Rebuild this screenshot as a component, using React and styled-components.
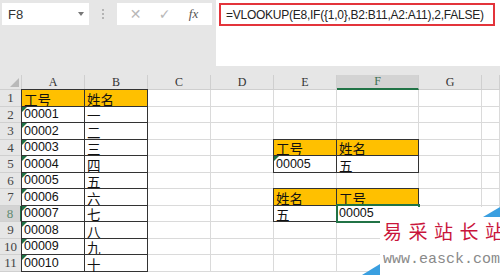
import React from 'react';
import styled, { createGlobalStyle } from 'styled-components';

const GlobalStyle = createGlobalStyle`
  body {
    margin: 0;
    background: #fff;
    font-family: "Liberation Sans", "Noto Sans CJK SC", sans-serif;
  }
`

const Screen = styled.div`
  position: relative;
  width: 500px;
  height: 275px;
  overflow: hidden;
  background: #fff;
`

const TopBar = styled.div`
  display: flex;
  align-items: flex-start;
  height: 63px;
  background: #e6e6e6;
`

const NameBox = styled.div`
  display: flex;
  align-items: center;
  justify-content: space-between;
  box-sizing: border-box;
  width: 87px;
  height: 22px;
  margin: 3px 0 0 2px;
  padding: 0 5px 0 6px;
  background: #fff;
  color: #333;
  font-size: 13px;
`

const Caret = styled.span`
  width: 0;
  height: 0;
  border-left: 3px solid transparent;
  border-right: 3px solid transparent;
  border-top: 4px solid #777;
`

const Grip = styled.div`
  display: flex;
  flex-direction: column;
  justify-content: center;
  gap: 2px;
  width: 28px;
  height: 22px;
  margin-top: 3px;
  align-items: center;
`

const Dot = styled.span`
  width: 2px;
  height: 2px;
  background: #b4b4b4;
`

const ButtonBox = styled.div`
  display: flex;
  align-items: center;
  justify-content: space-around;
  box-sizing: border-box;
  width: 95px;
  height: 22px;
  margin-top: 3px;
  padding: 0 4px;
  background: #fff;
`

const ToolIcon = styled.span`
  width: 26px;
  text-align: center;
  color: ${p => p.$dark ? '#555' : '#b8b8b8'};
  font-family: ${p => p.$dark ? '"Liberation Serif", serif' : '"DejaVu Sans", sans-serif'};
  font-style: ${p => p.$dark ? 'italic' : 'normal'};
  font-size: ${p => p.$dark ? '13px' : '14px'};
`

const FormulaPanel = styled.div`
  flex: 1;
  height: 63px;
  margin-left: 4px;
  padding: 3px 5px 0 3px;
  background: #fff;
`

const FormulaBox = styled.div`
  display: flex;
  align-items: center;
  box-sizing: border-box;
  width: 276px;
  height: 23px;
  padding-left: 5px;
  border: 2px solid #e3343b;
  color: #222;
  font-size: 12px;
  letter-spacing: -0.25px;
  white-space: nowrap;
`

const Strip = styled.div`
  height: 12px;
  background: #e6e6e6;
`

const Row = styled.div`
  display: flex;
  height: ${p => p.$h}px;
`

const Corner = styled.div`
  position: relative;
  box-sizing: border-box;
  width: 22px;
  background: #e6e6e6;
  border-right: 1px solid #cfcfcf;
  border-bottom: 1px solid #cfcfcf;

  &::after {
    content: '';
    position: absolute;
    right: 2px;
    bottom: 2px;
    border-left: 9px solid transparent;
    border-bottom: 9px solid #b9b9b9;
  }
`

const ColHead = styled.div`
  display: flex;
  align-items: center;
  justify-content: center;
  box-sizing: border-box;
  width: ${p => p.$w}px;
  flex: ${p => p.$grow ? 1 : 'none'};
  background: ${p => p.$active ? '#d3d3d3' : '#e6e6e6'};
  border-right: 1px solid #cfcfcf;
  border-bottom: ${p => p.$active ? '2px solid #217346' : '1px solid #cfcfcf'};
  color: ${p => p.$active ? '#3d6f52' : '#333'};
  font-family: "Liberation Serif", serif;
  font-size: 12px;
`

const RowHead = styled.div`
  display: flex;
  align-items: center;
  justify-content: center;
  box-sizing: border-box;
  width: 22px;
  background: ${p => p.$active ? '#d3d3d3' : '#e6e6e6'};
  border-bottom: 1px solid #d0d0d0;
  border-right: ${p => p.$active ? '2px solid #217346' : '1px solid #cfcfcf'};
  color: ${p => p.$active ? '#5f8a70' : '#444'};
  font-family: "Liberation Serif", serif;
  font-size: 13px;
  line-height: 14px;
`

const Cell = styled.div`
  position: relative;
  display: flex;
  align-items: flex-end;
  box-sizing: border-box;
  width: ${p => p.$w}px;
  flex: ${p => p.$grow ? 1 : 'none'};
  padding: 0 0 ${p => p.$cjk ? '0' : '1px'} 2px;
  background: ${p => p.$fill ? '#ffc000' : '#fff'};
  border-right: 1px solid ${p => p.$boxed ? '#333' : '#dadada'};
  border-bottom: 1px solid ${p => p.$boxed ? '#333' : '#dadada'};
  box-shadow: ${p => p.$boxed ? '-1px 0 0 #333, 0 -1px 0 #333, -1px -1px 0 #333' : 'none'};
  color: #111;
  font-size: ${p => p.$cjk ? '13.5px' : '12.5px'};
  font-family: ${p => p.$cjk ? '"Noto Sans CJK SC", sans-serif' : '"Liberation Sans", sans-serif'};
  line-height: ${p => p.$cjk ? '14px' : '13px'};
  white-space: nowrap;

  &::before {
    content: ${p => p.$flag ? "''" : 'none'};
    position: absolute;
    top: 0;
    left: 0;
    border-top: 5px solid #1e7145;
    border-right: 5px solid transparent;
  }

  &::after {
    content: ${p => p.$selected ? "''" : 'none'};
    position: absolute;
    top: -2px;
    left: -1px;
    right: -2px;
    bottom: -2px;
    border: 2px solid #217346;
    z-index: 2;
  }
`

const Mark = styled.div`
  position: absolute;
  left: 360px;
  top: 205px;
  width: 140px;
  height: 70px;
  z-index: 5;
`

const MarkShape = styled.svg`
  position: absolute;
  left: 0;
  top: 0;
`

const MarkTitle = styled.div`
  position: absolute;
  left: 23px;
  top: 15px;
  width: 117px;
  overflow: hidden;
  color: #c9153b;
  font-family: "Noto Sans CJK SC", sans-serif;
  font-size: 19px;
  letter-spacing: 6.5px;
  white-space: nowrap;
  line-height: 22px;
`

const MarkUrl = styled.div`
  position: absolute;
  left: 23px;
  top: 47px;
  width: 117px;
  overflow: hidden;
  color: #8a8a8a;
  font-family: "Liberation Mono", monospace;
  font-size: 15px;
  white-space: nowrap;
  line-height: 16px;
`

const columns = [
  { key: 'A', w: 63 },
  { key: 'B', w: 63 },
  { key: 'C', w: 63 },
  { key: 'D', w: 63 },
  { key: 'E', w: 63 },
  { key: 'F', w: 82 },
  { key: 'G', w: 63 },
  { key: 'H', w: 18, grow: true },
]

const heights = [17, 16, 17, 16, 17, 16, 17, 16, 17, 16, 17]
const names = ['一', '二', '三', '四', '五', '六', '七', '八', '九', '十']

// cells keyed "A1"
const cells = {
  A1: { text: '工号', fill: true, boxed: true },
  B1: { text: '姓名', fill: true, boxed: true },
  E4: { text: '工号', fill: true, boxed: true },
  F4: { text: '姓名', fill: true, boxed: true },
  E5: { text: '00005', boxed: true, flag: true },
  F5: { text: '五', boxed: true },
  E7: { text: '姓名', fill: true, boxed: true },
  F7: { text: '工号', fill: true, boxed: true },
  E8: { text: '五', boxed: true },
  F8: { text: '00005', selected: true },
}
names.forEach((n, i) => {
  cells['A' + (i + 2)] = { text: String(i + 1).padStart(5, '0'), boxed: true, flag: true }
  cells['B' + (i + 2)] = { text: n, boxed: true }
})

const isCjk = t => /[\u4e00-\u9fff]/.test(t)

export default function App() {
  return (
    <Screen>
      <GlobalStyle />
      <TopBar>
        <NameBox>
          F8
          <Caret />
        </NameBox>
        <Grip>
          <Dot />
          <Dot />
          <Dot />
        </Grip>
        <ButtonBox>
          <ToolIcon>✕</ToolIcon>
          <ToolIcon>✓</ToolIcon>
          <ToolIcon $dark>fx</ToolIcon>
        </ButtonBox>
        <FormulaPanel>
          <FormulaBox>=VLOOKUP(E8,IF({'{'}1,0{'}'},B2:B11,A2:A11),2,FALSE)</FormulaBox>
        </FormulaPanel>
      </TopBar>
      <Strip />
      <Row $h={15}>
        <Corner />
        {columns.map(c => (
          <ColHead key={c.key} $w={c.w} $grow={c.grow} $active={c.key === 'F'}>
            {c.key === 'H' ? '' : c.key}
          </ColHead>
        ))}
      </Row>
      {heights.map((h, i) => {
        const r = i + 1
        return (
          <Row key={r} $h={h}>
            <RowHead $active={r === 8}>{r}</RowHead>
            {columns.map(c => {
              const cell = cells[c.key + r] || {}
              const text = cell.text || ''
              return (
                <Cell
                  key={c.key}
                  $w={c.w}
                  $grow={c.grow}
                  $fill={cell.fill}
                  $boxed={cell.boxed}
                  $flag={cell.flag}
                  $selected={cell.selected}
                  $cjk={isCjk(text)}
                >
                  {text}
                </Cell>
              )
            })}
          </Row>
        )
      })}
      <Mark>
        <MarkShape width="140" height="70" viewBox="0 0 140 70">
          <polygon points="20,2 140,2 140,70 20,70" fill="#fff" />
          <polygon points="123,12 140,2 140,12" fill="#3a9fe0" />
          <polygon points="2,70 20,59 20,70" fill="#3a9fe0" />
        </MarkShape>
        <MarkTitle>易采站长站</MarkTitle>
        <MarkUrl>www.easck.com</MarkUrl>
      </Mark>
    </Screen>
  );
}
